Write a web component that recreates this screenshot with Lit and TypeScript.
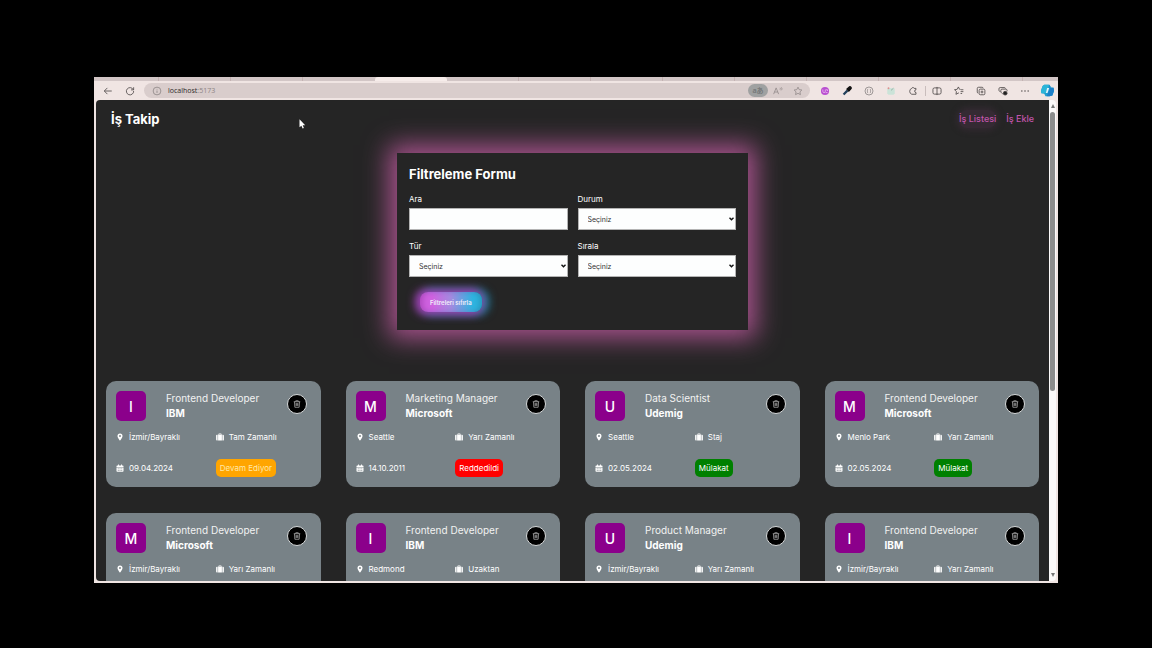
import { LitElement, html, css, svg, nothing } from "lit";
import { customElement, property } from "lit/decorators.js";

interface Job {
  position: string;
  company: string;
  location: string;
  type: string;
  date: string;
  status: string;
}

const STATUS_CLASS: Record<string, string> = {
  "Devam Ediyor": "ongoing",
  Reddedildi: "rejected",
  Mülakat: "interview",
};

const JOBS: Job[] = [
  { position: "Frontend Developer", company: "IBM", location: "İzmir/Bayraklı", type: "Tam Zamanlı", date: "09.04.2024", status: "Devam Ediyor" },
  { position: "Marketing Manager", company: "Microsoft", location: "Seattle", type: "Yarı Zamanlı", date: "14.10.2011", status: "Reddedildi" },
  { position: "Data Scientist", company: "Udemig", location: "Seattle", type: "Staj", date: "02.05.2024", status: "Mülakat" },
  { position: "Frontend Developer", company: "Microsoft", location: "Menlo Park", type: "Yarı Zamanlı", date: "02.05.2024", status: "Mülakat" },
  { position: "Frontend Developer", company: "Microsoft", location: "İzmir/Bayraklı", type: "Yarı Zamanlı", date: "02.05.2024", status: "Mülakat" },
  { position: "Frontend Developer", company: "IBM", location: "Redmond", type: "Uzaktan", date: "02.05.2024", status: "Mülakat" },
  { position: "Product Manager", company: "Udemig", location: "İzmir/Bayraklı", type: "Yarı Zamanlı", date: "02.05.2024", status: "Mülakat" },
  { position: "Frontend Developer", company: "IBM", location: "İzmir/Bayraklı", type: "Yarı Zamanlı", date: "02.05.2024", status: "Mülakat" },
];

const star = svg`<path d="M8 1.800l1.900 4 4.300.6-3.100 3 .8 4.400L8 11.700l-3.900 2.100.8-4.400-3.100-3 4.300-.6z"/>`;

const ICONS = {
  back: svg`<path d="M14 8H2.500M7 3L2 8l5 5"/>`,
  reload: svg`<path d="M13.300 6A5.800 5.800 0 1 0 13.800 8M13.800 2v4.200H9.600"/>`,
  info: svg`<circle cx="8" cy="8" r="6.200"/><path d="M8 7.300v3.800M8 4.600v1"/>`,
  readAloud: svg`<path d="M1 13L5 3l4 10M2.400 9.600h5.200M11 3c1 .8 1 2.200 0 3M13 2c1.800 1.500 1.800 3.500 0 5"/>`,
  star,
  starLines: svg`<path d="M10.500 5.500L8.900 5.300 7 1.500 5.100 5.300l-4.300.6 3.100 3-.8 4.400L7 11.200l1 .6M11 6h4M10.500 9H15M10.500 12H13"/>`,
  dropper: svg`<path d="M2.500 13.500L9 7" stroke="#23405c" stroke-width="3.600"/><path d="M8 5l3 3 3.200-3.300a2 2 0 0 0-2.900-2.900z" fill="#111" stroke="#111" stroke-width="2"/>`,
  braces: svg`<circle cx="8" cy="8" r="6.400"/><path d="M6.500 5C5 5 6.200 7.500 4.800 8c1.400.5.2 3 1.700 3M9.500 5c1.500 0 .3 2.500 1.700 3-1.400.5-.2 3-1.700 3"/>`,
  puzzle: svg`<path d="M12.800 5.500V3.800H9.800a2 2 0 0 0-3.800 0A5 5 0 0 0 6 13.200h6.800v-2.800a2 2 0 0 1 0-4.400z"/>`,
  split: svg`<rect x="1.500" y="3" width="13" height="10" rx="2.500"/><path d="M8 1.500v13"/>`,
  collections: svg`<path d="M3.500 11.500A2 2 0 0 1 2 9.500V4a2 2 0 0 1 2-2h5.500a2 2 0 0 1 2 1.500"/><rect x="5" y="5" width="9.200" height="9" rx="2"/><path d="M9.600 7.200v4.600M7.300 9.500h4.600"/>`,
  shield: svg`<path d="M4 9C2.500 9 1.500 8 1.500 6.500V4.500a2 2 0 0 1 2-2H10a2 2 0 0 1 2 1.500M14.500 8.500V7a2 2 0 0 0-2-2H6.500a2 2 0 0 0-2 2c0 3 1 4.500 3 5.500"/><circle cx="11.500" cy="11.500" r="3" fill="#222"/>`,
  dots: svg`<circle cx="3" cy="8" r=".6"/><circle cx="8" cy="8" r=".6"/><circle cx="13" cy="8" r=".6"/>`,
};

const pin = svg`<path fill="currentColor" fill-rule="evenodd" d="M8 1a5 5 0 0 0-5 5c0 3.500 5 9.500 5 9.500S13 9.500 13 6a5 5 0 0 0-5-5zm0 3.200a1.900 1.900 0 1 1 0 3.800 1.900 1.900 0 0 1 0-3.800z"/>`;
const suitcase = svg`<path fill="currentColor" fill-rule="evenodd" d="M5 3.500V2a1 1 0 0 1 1-1h4a1 1 0 0 1 1 1v1.500h.8V15H4.200V3.500zM6.300 2.300v1.200h3.400V2.300zM3.200 3.500V15H2a1.800 1.800 0 0 1-1.800-1.800v-8A1.800 1.800 0 0 1 2 3.500zM12.800 3.500H14a1.800 1.800 0 0 1 1.800 1.800v8A1.800 1.800 0 0 1 14 15h-1.200z"/>`;
const calendar = svg`<path fill="currentColor" fill-rule="evenodd" d="M4 1h1.800v2h4.400V1H12v2h1.500A1.500 1.500 0 0 1 15 4.500V6H1V4.500A1.500 1.500 0 0 1 2.500 3H4zM1 7h14v7a1.500 1.500 0 0 1-1.500 1.500h-11A1.500 1.500 0 0 1 1 14zm2.500 2v1.300h2V9zm3.500 0v1.300h2V9zm3.500 0v1.300h2V9zm-7 3v1.300h2V12zM7 12v1.300h2V12zm3.500 0v1.300h2V12z"/>`;
const trash = svg`<path fill="none" stroke="currentColor" stroke-width="1.600" d="M1.500 3.500h13M5.500 3.500V1.500h5v2M3 3.500l.7 11h8.600l.7-11M6.200 6.200v5.600M8 6.200v5.600M9.800 6.200v5.600"/>`;

@customElement("browser-bar")
export class BrowserBar extends LitElement {
  static styles = css`
    :host { display: block; background: #f0e5e3; }
    .tabs { display: flex; height: 4px; background: #d2c6c6; overflow: hidden; }
    .tab { flex: 0 0 72px; box-sizing: border-box; border-right: 1px solid #c4b2b2; }
    .tab.first { flex-basis: 65px; }
    .tab.before { border-right-color: transparent; }
    .tab.active { background: #f6ecea; border-radius: 3px 3px 0 0; border-right: 0; }
    .bar { display: flex; align-items: center; height: 19px; padding: 0 0 0 3px; }
    button { display: grid; place-items: center; flex: none; width: 22px; height: 16px; padding: 0; border: 0; background: none; color: #4b4646; }
    svg { display: block; width: 10px; height: 10px; fill: none; stroke: currentColor; stroke-width: 1.3; overflow: visible; }
    .address { flex: 1; min-width: 0; display: flex; align-items: center; height: 15px; margin: 0 4px 0 3px; padding: 0 2px 0 8px; border-radius: 8px; background: #d9cdcc; color: #8d8585; }
    .url { flex: 1; min-width: 0; margin-left: 6px; font: 7px/15px "Open Sans", sans-serif; color: #8d8484; }
    .host { color: #2e2a2a; }
    .address button { width: 20px; color: #928a8a; }
    .address .chip { height: 13px; border-radius: 7px; background: #9fa1a1; color: #777a7b; font: 700 7px/13px "Noto Sans", "Noto Sans CJK JP", sans-serif; }
    .faint { color: #8a8484; }
    .sep { flex: none; width: 1px; height: 10px; background: #c9bdbc; margin-left: 1px; }
    .copilot { width: 13px; height: 13px; stroke: none; }
  `;

  private tool(name: keyof typeof ICONS, label: string, cls = "") {
    return html`<button class=${cls} aria-label=${label}><svg viewBox="0 0 16 16" aria-hidden="true">${ICONS[name]}</svg></button>`;
  }

  render() {
    const tabs = ["first", "", "", "before", "active", "", "", "", "", "", "", "", ""];
    return html`
      <div class="tabs">${tabs.map((c) => html`<div class="tab ${c}"></div>`)}</div>
      <div class="bar">
        ${this.tool("back", "Geri")}${this.tool("reload", "Yenile")}
        <div class="address">
          <svg viewBox="0 0 16 16" aria-hidden="true">${ICONS.info}</svg>
          <div class="url"><span class="host">localhost</span>:5173</div>
          <button class="chip">aあ</button>
          ${this.tool("readAloud", "Sesli oku")}${this.tool("star", "Favori")}
        </div>
        <button aria-label="Uzantı"><svg viewBox="0 0 16 16"><circle cx="8" cy="8" r="6.500" fill="#b94fd0" stroke="none"/><path d="M4.500 5.500v3a2 2 0 0 0 4 0v-3M9 10.500h3M9.500 6h2.500v2" stroke="#e9b8f2"/></svg></button>
        ${this.tool("dropper", "Renk seçici")}${this.tool("braces", "Uzantı", "faint")}
        <button aria-label="Uzantı"><svg viewBox="0 0 16 16"><path d="M2 4l4-1 8 1v8l-2 2H4l-2-2z" fill="#cbe3d8" stroke="none"/><circle cx="4" cy="3.500" r="1.500" fill="#e08f8f" stroke="none"/><path d="M8 7l4-3.500" stroke="#8fa89f"/></svg></button>
        ${this.tool("puzzle", "Uzantılar")}
        <span class="sep"></span>
        ${this.tool("split", "Bölünmüş ekran")}${this.tool("starLines", "Favoriler")}${this.tool("collections", "Koleksiyonlar")}${this.tool("shield", "Performans")}${this.tool("dots", "Menü")}
        <button aria-label="Copilot">
          <svg class="copilot" viewBox="0 0 16 16"><path d="M4 1h6.500l1.500 3 3.500.5.5 4-2 5.500-3.500 1H5.500L4 12l-3.500-.5L0 8l2-5.500z" fill="#1f9fd0"/><path d="M4 1h6l-4 10-5.500.5L0 8l2-5.500z" fill="#2bb5d8"/><path d="M10.500 1l1.500 3-2 .5zM11 5l4.500-.5.5 4-2 5.500-3.500 1H7z" fill="#1c7fc8"/><path d="M7.500 5H10l-2 6H6z" fill="#e6f5fa"/></svg>
        </button>
      </div>`;
  }
}

@customElement("filter-form")
export class FilterForm extends LitElement {
  static styles = css`
    :host { display: block; box-sizing: border-box; width: 351px; max-width: 100%; }
    form { padding: 12px; background: #252525; box-shadow: 0 0 24px 8px #a8528d; }
    h2 { margin: 0; font-size: 13px; line-height: 18px; font-weight: 700; }
    .fields { display: grid; grid-template-columns: 1fr 1fr; gap: 9px 10px; margin-top: 9px; }
    .field { display: grid; gap: 2px; }
    label { font-size: 8px; line-height: 14px; }
    .control { display: grid; align-items: center; }
    input, select { grid-area: 1 / 1; box-sizing: border-box; width: 100%; height: 22px; padding: 0 9px; border: 1px solid #b4b4b4; border-radius: 0; background: #fdfefe; color: #333; font: inherit; font-size: 7px; appearance: none; }
    .arrow { grid-area: 1 / 1; justify-self: end; width: 5px; height: 4px; margin-right: 2px; pointer-events: none; fill: none; stroke: #111; stroke-width: 1.4; }
    .reset { display: block; margin: 15px 0 6px 11px; padding: 0 10px; height: 20px; border: 0; border-radius: 8px; background: linear-gradient(90deg, #cf62e0 20%, #a38ae0 50%, #2fb4e0 85%); box-shadow: inset 5px 0 6px -3px #a844b8, inset -5px 0 6px -3px #2595b8, -2px 0 8px 3px #a03cae, 4px 0 8px 3px #1f7f9c; color: #f3eefa; font: inherit; font-size: 6px; font-weight: 600; }
  `;

  private select(id: string, label: string) {
    return html`<div class="field">
      <label for=${id}>${label}</label>
      <div class="control">
        <select id=${id}><option>Seçiniz</option></select>
        <svg class="arrow" viewBox="0 0 5 4" aria-hidden="true"><path d="M.5.7l2 2 2-2"/></svg>
      </div>
    </div>`;
  }

  render() {
    return html`<form @submit=${(e: Event) => e.preventDefault()}>
      <h2>Filtreleme Formu</h2>
      <div class="fields">
        <div class="field"><label for="ara">Ara</label><div class="control"><input id="ara" type="text" /></div></div>
        ${this.select("durum", "Durum")}${this.select("tur", "Tür")}${this.select("sirala", "Sırala")}
      </div>
      <button class="reset" type="reset">Filtreleri sıfırla</button>
    </form>`;
  }
}

@customElement("job-card")
export class JobCard extends LitElement {
  @property({ attribute: false }) job?: Job;

  static styles = css`
    :host { display: block; padding: 10px; border-radius: 10px; background: #788287; color: #fff; }
    .head { display: flex; align-items: center; gap: 20px; }
    .avatar { display: grid; place-items: center; flex: none; width: 30px; height: 30px; border-radius: 5px; background: #8b008b; font-size: 14px; font-weight: 500; }
    .names { flex: 1; min-width: 0; font-size: 10px; line-height: 15px; white-space: nowrap; }
    h3, p { margin: 0; font-size: inherit; }
    h3 { font-weight: 400; color: #f2f2f2; }
    p { font-weight: 700; }
    .delete { display: grid; place-items: center; flex: none; box-sizing: border-box; width: 20px; height: 20px; margin: 0 4px 4px 0; padding: 0; border: 1px solid #d5d8d9; border-radius: 50%; background: #000; color: #a9a9a9; }
    svg { display: block; width: 8px; height: 8px; }
    .meta { display: grid; grid-template-columns: 1fr 1fr; grid-template-rows: 16px 18px; align-items: center; gap: 14px 5px; margin-top: 8px; font-size: 8px; line-height: 16px; }
    .item { display: flex; align-items: center; gap: 5px; white-space: nowrap; }
    .status { justify-self: start; padding: 0 4px; border-radius: 5px; line-height: 18px; white-space: nowrap; }
    .ongoing { background: #ffa500; color: #ffe9a8; }
    .rejected { background: #ff0000; }
    .interview { background: #008000; }
  `;

  render() {
    const j = this.job;
    if (!j) return nothing;
    const item = (icon: unknown, text: string) =>
      html`<div class="item"><svg viewBox="0 0 16 16" aria-hidden="true">${icon}</svg><span>${text}</span></div>`;
    return html`
      <div class="head">
        <div class="avatar">${j.company[0]}</div>
        <div class="names"><h3>${j.position}</h3><p>${j.company}</p></div>
        <button class="delete" aria-label="Sil"><svg viewBox="0 0 16 16" aria-hidden="true">${trash}</svg></button>
      </div>
      <div class="meta">
        ${item(pin, j.location)}${item(suitcase, j.type)}${item(calendar, j.date)}
        <span class="status ${STATUS_CLASS[j.status]}">${j.status}</span>
      </div>`;
  }
}

@customElement("app-root")
export class AppRoot extends LitElement {
  static styles = css`
    :host { display: flex; box-sizing: border-box; height: 100vh; padding: 77px 94px 65px; background: #000; font-family: Inter, "Noto Sans", sans-serif; color: #fff; }
    .window { flex: 1; min-width: 0; display: flex; flex-direction: column; background: #f0e5e3; }
    .view { flex: 1; min-height: 0; display: flex; margin: 0 2px 2px; border-radius: 4px; overflow: hidden; }
    .page { position: relative; flex: 1; min-width: 0; overflow: hidden auto; scrollbar-width: none; background: #252525; }
    header { display: flex; align-items: center; justify-content: space-between; padding: 10px 15px; }
    h1 { margin: 0; font-size: 13px; line-height: 18px; font-weight: 700; }
    nav { display: flex; gap: 10px; font-size: 9px; line-height: 18px; font-weight: 500; }
    nav a { color: #c255ac; text-decoration: none; }
    nav .current { border-radius: 8px; background: #352a33; box-shadow: 0 0 6px 2px #352a33; }
    filter-form { margin: 15px auto 0; }
    .jobs { display: grid; grid-template-columns: repeat(4, 1fr); gap: 26px 25px; padding: 51px 10px 25px; }
    .scroll { flex: none; display: flex; flex-direction: column; align-items: center; justify-content: space-between; width: 7px; padding: 4px 0; box-sizing: border-box; background: #fbf9f9; }
    .track { flex: 1; width: 5px; margin: 4px 0; }
    .thumb { height: 61%; border-radius: 3px; background: #8c8c8c; }
    .tri { width: 4px; height: 4px; fill: #777; }
    .cursor { position: absolute; left: 203px; top: 19px; width: 7px; height: 10px; }
  `;

  render() {
    return html`<div class="window">
      <browser-bar></browser-bar>
      <div class="view">
        <div class="page">
          <header>
            <h1>İş Takip</h1>
            <nav><a class="current" href="#liste">İş Listesi</a><a href="#ekle">İş Ekle</a></nav>
          </header>
          <main>
            <filter-form></filter-form>
            <section class="jobs">${JOBS.map((j) => html`<job-card .job=${j}></job-card>`)}</section>
          </main>
          <svg class="cursor" viewBox="0 0 7 10" aria-hidden="true"><path d="M.5.3v8l1.900-1.600 1.200 2.800 1.300-.6-1.200-2.600h2.500z" fill="#fff"/></svg>
        </div>
        <div class="scroll">
          <svg class="tri" viewBox="0 0 4 4"><path d="M2 0l2 4H0z"/></svg>
          <div class="track"><div class="thumb"></div></div>
          <svg class="tri" viewBox="0 0 4 4"><path d="M2 4L0 0h4z"/></svg>
        </div>
      </div>
    </div>`;
  }
}
